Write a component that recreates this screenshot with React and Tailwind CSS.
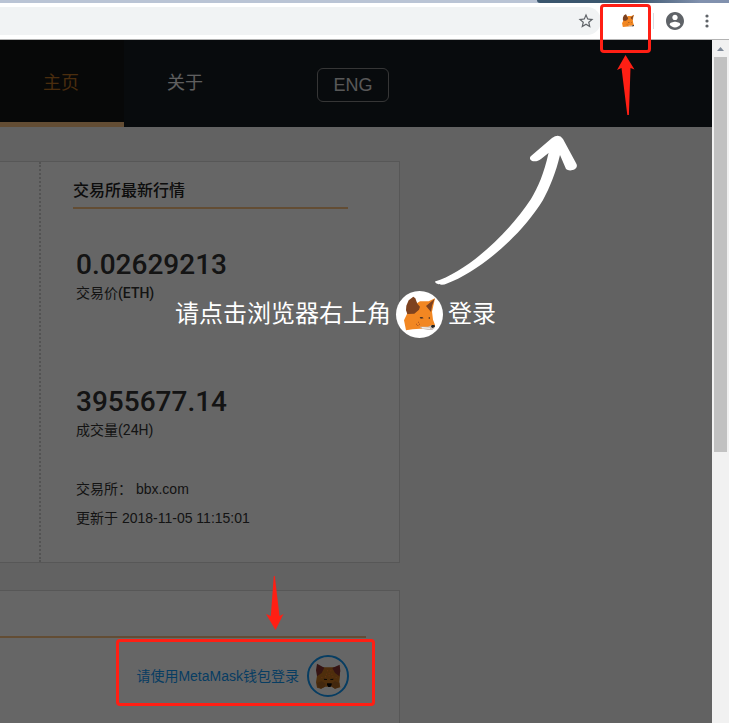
import React from "react";

const SANS = "font-['Liberation_Sans','Noto_Sans_CJK_SC',sans-serif]";

function FoxProfile({ className }) {
  return (
    <svg viewBox="0 0 141 141" className={className} aria-hidden="true">
      <path d="M30 118 24 88 34 67 60 38 72 31 98 31 117 22 112 44 108 62 111 86 117 102 108 113 72 113 50 115Z" fill="#f28722" />
      <path d="M52 17 58 22 64 38 72 47 69 56 55 68 34 69 30 58 31 44 38 28Z" fill="#7d421f" />
      <path d="M116 23 90 45 105 63 108 44Z" fill="#7d421f" />
      <path d="M71 107 96 107 108 102 116 111 109 117 96 117 78 113Z" fill="#c9bfb8" />
      <path d="M78 110 102 112" stroke="#f3eee9" strokeWidth="4" />
      <path d="M107 102 116 102 117 108 109 111 105 107Z" fill="#222" />
      <path d="M71 78H79L83 82 74 83Z M98 79H102V83H98Z" fill="#4b3526" />
      <path d="M60 98h3v3h-3zM66 92h3v3h-3zM64 102h3v3h-3zM69 98h3v3h-3z" fill="#ab501f" />
    </svg>
  );
}

function FoxFace({ className }) {
  return (
    <svg viewBox="0 0 126 126" className={className} aria-hidden="true">
      <path d="M30 36 50 37 76 37 98 36 99 62 97 80 100 97 84 101 74 95 54 95 42 101 30 98 27 82 30 62Z" fill="#c47420" />
      <path d="M30 26 52 38 44 54 30 64 27 46Z M98 29 76 39 84 54 97 64 100 48Z" fill="#853330" />
      <path d="M30 84 44 78 56 86 54 95 42 101 32 96Z M72 86 84 78 97 84 96 96 84 101 75 95Z" fill="#a96424" />
      <path d="M50 71 60 72 60 75 52 75Z M80 71 70 72 70 75 78 75Z" fill="#24180e" />
      <path d="M60 85h14v5l-4 6h-6l-4-6Z" fill="#070707" />
      <path d="M60 46h3v3h-3zM70 46h3v3h-3zM65 53h3v3h-3zM57 56h3v3h-3zM73 56h3v3h-3zM65 61h3v3h-3zM54 64h3v3h-3zM76 64h3v3h-3zM43 66h3v3h-3zM86 66h3v3h-3z" fill="#fa762c" />
    </svg>
  );
}

function BrowserBar() {
  return (
    <header className="shrink-0 border-b border-[#b3b3b3] bg-white">
      <div className="flex h-[3px] bg-[#bac4d5]">
        <div className="ml-auto w-[192px] rounded-bl bg-linear-to-r from-[#3b566e] from-50% to-[#8191ae] to-85%" />
      </div>
      <div className="flex h-9 items-center pr-[19px]">
        <div className="flex h-7 flex-1 items-center justify-end rounded-r-full bg-[#f1f3f4] pr-1.5">
          <input aria-label="Address" className="min-w-0 flex-1 bg-transparent outline-none" />
          <button aria-label="Bookmark">
            <svg viewBox="0 0 24 24" className="size-[18px]" fill="#5f6368">
              <path d="M22 9.24l-7.19-.62L12 2 9.19 8.63 2 9.24l5.46 4.73L5.82 21 12 17.27 18.18 21l-1.63-7.03L22 9.24zM12 15.4l-3.76 2.27 1-4.28-3.32-2.88 4.38-.38L12 6.1l1.71 4.04 4.38.38-3.32 2.88 1 4.28L12 15.4z" />
            </svg>
          </button>
        </div>
        <button aria-label="MetaMask" className="ml-[18px]">
          <FoxProfile className="size-[18px]" />
        </button>
        <div className="ml-4 h-4 w-px bg-[#dadce0]" />
        <button aria-label="Profile" className="ml-3">
          <svg viewBox="2 2 20 20" className="size-[18px]" fill="#5f6368">
            <path d="M12 2C6.48 2 2 6.48 2 12s4.48 10 10 10 10-4.48 10-10S17.52 2 12 2zm0 3c1.66 0 3 1.34 3 3s-1.34 3-3 3-3-1.34-3-3 1.34-3 3-3zm0 14.2c-2.5 0-4.71-1.28-6-3.22.03-1.99 4-3.08 6-3.08 1.99 0 5.97 1.09 6 3.08-1.29 1.94-3.5 3.22-6 3.22z" />
          </svg>
        </button>
        <button aria-label="More" className="ml-5">
          <svg viewBox="0 0 6 16" className="h-4 w-[6px]" fill="#5f6368">
            <circle cx="3" cy="3" r="1.6" />
            <circle cx="3" cy="8" r="1.6" />
            <circle cx="3" cy="13" r="1.6" />
          </svg>
        </button>
      </div>
    </header>
  );
}

function SiteNav() {
  return (
    <nav className="flex h-[87px] bg-[#141c22] text-lg text-[#eee]">
      <a href="#home" className="w-[124px] border-b-[5px] border-[#f7c182] bg-[#131415] pt-[29px] pl-[43px] text-[#b87024]">
        主页
      </a>
      <a href="#about" className="w-[124px] pt-[29px] pl-[43px]">
        关于
      </a>
      <button className="mt-7 ml-[69px] h-[34px] w-[72px] rounded-md border border-[#888] text-[#ddd]">ENG</button>
    </nav>
  );
}

function Stat({ value, children }) {
  return (
    <div className="pl-[3px]">
      <p className="font-['Roboto',sans-serif] text-[28px] leading-8 font-medium text-[#333]">{value}</p>
      <p className="pt-0.5 text-sm text-[#333]">{children}</p>
    </div>
  );
}

function MarketCard() {
  return (
    <section className="mt-[34px] flex h-[402px] w-[400px] border-y border-r border-[#dadada] bg-white">
      <div className="w-[39px] shrink-0" />
      <div className="flex-1 border-l-2 border-dotted border-[#d0d0d0] pt-[17px] pr-[51px] pl-8">
        <h2 className="border-b-2 border-[#f7c182] pb-1 text-base font-medium text-[#222]">交易所最新行情</h2>
        <div className="mt-10">
          <Stat value="0.02629213">
            交易价<span className="font-['Roboto',sans-serif] font-medium">(ETH)</span>
          </Stat>
        </div>
        <div className="mt-[83px]">
          <Stat value="3955677.14">
            成交量<span className="font-['Roboto',sans-serif]">(24H)</span>
          </Stat>
        </div>
        <div className="mt-[35px] pl-[3px] text-sm leading-[29px] text-[#333]">
          <p>交易所： bbx.com</p>
          <p>更新于 2018-11-05 11:15:01</p>
        </div>
      </div>
    </section>
  );
}

function LoginCard() {
  return (
    <section className="mt-[27px] min-h-40 w-[400px] border-t border-r border-[#dadada] bg-white pt-[45px] pr-[33px]">
      <div className="border-t-2 border-[#f7c182] pt-[17px] pr-[17px]">
        <a href="#login" className="flex items-center justify-end gap-2 text-sm text-[#1298f5]">
          请使用MetaMask钱包登录
          <span className="size-[42px] rounded-full border-2 border-[#1298f5]">
            <FoxFace className="-m-0.5 size-[42px] max-w-none" />
          </span>
        </a>
      </div>
    </section>
  );
}

function LoginHint() {
  return (
    <div className="absolute inset-0 bg-black/60">
      <div className="flex items-center gap-[5px] pt-[251px] pl-[175px] text-2xl text-white">
        <span className="pb-0.5">请点击浏览器右上角</span>
        <span className="size-[47px] rounded-full bg-white">
          <FoxProfile className="size-[47px]" />
        </span>
        <span className="pb-0.5">登录</span>
      </div>
      <svg viewBox="0 0 220 160" className="absolute top-[91px] left-[380px] h-40 w-[220px]" fill="white" aria-hidden="true">
        <path d="M55 150.500C84 142 126 106 151 68C158 56 164 43 168.500 22L161 28C155 33 147 29 151 25L172 7Q179 2 183 8L196.500 33C199 39 189 41 186 38L180 24C176 41 170 56 163 69C139 108 96 142 67 152.500C62 155 55 153 55 150.500Z" />
      </svg>
    </div>
  );
}

function Marks() {
  return (
    <div className="pointer-events-none absolute inset-0">
      <div className="absolute top-1 left-[600px] h-[49px] w-[51px] rounded border-3 border-[#ff1f14]" />
      <div className="absolute top-[639px] left-[116px] h-[67px] w-[259px] rounded border-3 border-[#ff1f14]" />
      <svg viewBox="0 0 20 62" className="absolute top-[54px] left-[616px] h-[62px] w-5" fill="#ff1f14" aria-hidden="true">
        <path d="M9.500 1 18.500 15.500 14.500 14 12.900 61H11.300L5.500 14 1 16Z" />
      </svg>
      <svg viewBox="0 0 20 56" className="absolute top-[575px] left-[265px] h-14 w-5" fill="#ff1f14" aria-hidden="true">
        <path d="M8.800 1H9.800L14.500 41 18.500 39 10.500 55 1 39 5.800 41Z" />
      </svg>
    </div>
  );
}

export default function App() {
  return (
    <div className={`relative flex h-screen flex-col overflow-hidden ${SANS}`}>
      <BrowserBar />
      <div className="flex min-h-0 flex-1">
        <main className="relative min-w-0 flex-1 overflow-hidden bg-[#f5f5f5]">
          <SiteNav />
          <MarketCard />
          <LoginCard />
          <LoginHint />
        </main>
        <div className="flex w-[17px] shrink-0 flex-col items-center bg-[#f1f1f1]">
          <svg viewBox="0 0 17 17" className="size-[17px]" fill="#7f8a99" aria-hidden="true">
            <path d="M8.500 7 12 11H5Z" />
          </svg>
          <div className="h-[395px] w-[13px] bg-[#c1c1c1]" />
        </div>
      </div>
      <Marks />
    </div>
  );
}
